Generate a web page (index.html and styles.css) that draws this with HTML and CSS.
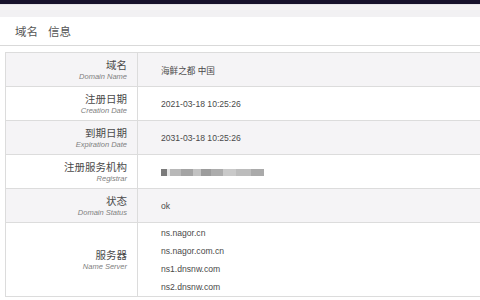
FILE: index.html
```html
<!DOCTYPE html>
<html lang="zh-CN">
<head>
<meta charset="utf-8">
<title>域名信息</title>
<link rel="stylesheet" href="styles.css">
</head>
<body>
<div class="topbar"></div>
<div class="strip"></div>
<div class="header"><span class="hword">域名</span><span class="hword">信息</span></div>
<div class="table">
  <div class="row alt">
    <div class="label"><div class="zh">域名</div><div class="en">Domain Name</div></div>
    <div class="value">海鲜之都 中国</div>
  </div>
  <div class="row">
    <div class="label"><div class="zh">注册日期</div><div class="en">Creation Date</div></div>
    <div class="value">2021-03-18 10:25:26</div>
  </div>
  <div class="row alt">
    <div class="label"><div class="zh">到期日期</div><div class="en">Expiration Date</div></div>
    <div class="value">2031-03-18 10:25:26</div>
  </div>
  <div class="row">
    <div class="label"><div class="zh">注册服务机构</div><div class="en">Registrar</div></div>
    <div class="value"><span class="blurred"></span></div>
  </div>
  <div class="row alt">
    <div class="label"><div class="zh">状态</div><div class="en">Domain Status</div></div>
    <div class="value">ok</div>
  </div>
  <div class="row tall">
    <div class="label"><div class="zh">服务器</div><div class="en">Name Server</div></div>
    <div class="value list">
      <div class="ns">ns.nagor.cn</div>
      <div class="ns">ns.nagor.com.cn</div>
      <div class="ns">ns1.dnsnw.com</div>
      <div class="ns">ns2.dnsnw.com</div>
    </div>
  </div>
</div>
</body>
</html>
```
FILE: styles.css
```css
html, body {
  margin: 0;
  padding: 0;
  background: #ffffff;
  overflow: hidden;
}
body {
  font-family: "Liberation Sans", "Noto Sans CJK SC", sans-serif;
  color: #4a4a4a;
  width: 480px;
  height: 300px;
}
.topbar {
  height: 4px;
  background: #16112b;
}
.strip {
  height: 12px;
  background: #f2f1f3;
  border-top: 1px solid #e6e5e8;
}
.header {
  height: 28px;
  display: flex;
  align-items: center;
  padding-left: 15px;
  font-size: 11.5px;
  color: #555;
  border-bottom: 1px solid #d9d9d9;
}
.hword {
  margin-right: 10px;
}
.table {
  margin-top: 6px;
  margin-left: 5px;
  border-top: 1px solid #dcdcdc;
  border-left: 1px solid #dcdcdc;
}
.row {
  display: grid;
  grid-template-columns: 132px 1fr;
  height: 33px;
  border-bottom: 1px solid #dcdcdc;
  background: #ffffff;
}
.row.alt {
  background: #f5f4f6;
}
.row.tall {
  height: 73px;
}
.label {
  border-right: 1px solid #dcdcdc;
  display: flex;
  flex-direction: column;
  justify-content: center;
  align-items: flex-end;
  padding-right: 10px;
}
.zh {
  font-size: 10.5px;
  line-height: 14px;
  color: #4a4a4a;
}
.en {
  font-size: 7.5px;
  line-height: 10px;
  font-style: italic;
  color: #808080;
}
.value {
  display: flex;
  align-items: center;
  padding-left: 23px;
  font-size: 8.6px;
  color: #4a4a4a;
}
.value.list {
  flex-direction: column;
  align-items: flex-start;
  justify-content: center;
}
.ns {
  line-height: 18px;
}
.blurred {
  display: inline-block;
  width: 103px;
  height: 7px;
  margin-top: 1px;
  background: linear-gradient(to right,
    #7a7a7a 0 6px, #e6e6e6 6px 9px, #b8b8b8 9px 20px, #a4a4a4 20px 32px,
    #c2c2c2 32px 40px, #9c9c9c 40px 50px, #acacac 50px 62px, #c9c9c9 62px 75px,
    #bcbcbc 75px 90px, #aaaaaa 90px 103px);
  filter: blur(0.6px);
}
```
